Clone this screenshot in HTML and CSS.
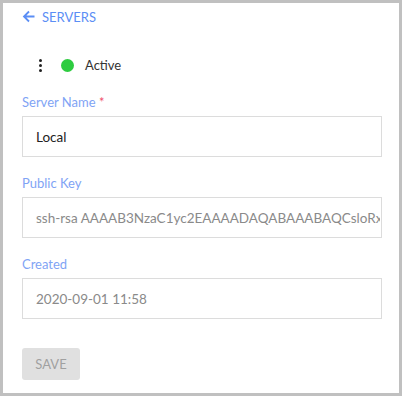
FILE: index.html
```html
<!DOCTYPE html>
<html>
<head>
	<title>Server</title>
	<link rel="stylesheet" href="styles.css">
</head>
<body>
	<div class="panel">
		<a class="back" href="#">
			<svg width="13" height="13" viewBox="0 0 13 13"><path d="M12.5 6.5H2M7 1.5L2 6.5L7 11.5" fill="none" stroke="#5b8ef5" stroke-width="1.8"/></svg>
			SERVERS
		</a>
		<div class="status">
			<span class="kebab"><i></i><i></i><i></i></span>
			<span class="dot"></span>
			<span class="state">Active</span>
		</div>
		<div class="field first">
			<label>Server Name <span class="req">*</span></label>
			<input type="text" class="dark" value="Local">
		</div>
		<div class="field">
			<label>Public Key</label>
			<input type="text" value="ssh-rsa AAAAB3NzaC1yc2EAAAADAQABAAABAQCsloRxHqT8" readonly>
		</div>
		<div class="field">
			<label>Created</label>
			<input type="text" value="2020-09-01 11:58" readonly>
		</div>
		<button class="save" disabled>SAVE</button>
	</div>
</body>
</html>
```
FILE: styles.css
```css
* {
	margin: 0;
	padding: 0;
	box-sizing: border-box;
}
body {
	font-family: "Lato", sans-serif;
	font-size: 13px;
}
.panel {
	width: 402px;
	height: 396px;
	border: 3px solid #c0c0c0;
	padding: 6px 17px 0 19px;
	background: #fff;
}
.back {
	display: flex;
	align-items: center;
	gap: 7px;
	height: 15px;
	color: #5b8ef5;
	text-decoration: none;
	font-size: 13px;
}
.status {
	display: flex;
	align-items: center;
	height: 18px;
	margin-top: 32px;
	padding-left: 17px;
}
.kebab {
	display: flex;
	flex-direction: column;
	gap: 2px;
	width: 3px;
}
.kebab i {
	width: 3px;
	height: 3px;
	background: #222;
	border-radius: 50%;
}
.dot {
	width: 13px;
	height: 13px;
	border-radius: 50%;
	background: #2ecc40;
	margin-left: 19px;
}
.state {
	margin-left: 11px;
	color: #333;
}
.field {
	margin-top: 18px;
}
.field.first {
	margin-top: 20px;
}
.field label {
	display: block;
	color: #7fa4f5;
	font-size: 13px;
	height: 17px;
	margin-bottom: 5px;
}
.req {
	color: #f0506e;
}
.field input {
	display: block;
	width: 360px;
	height: 41px;
	border: 1px solid #dcdcdc;
	padding: 0 1px 0 13px;
	font-family: inherit;
	font-size: 13.5px;
	color: #8a8a8a;
	outline: none;
}
.field input.dark {
	color: #222;
}
.save {
	margin-top: 29px;
	width: 58px;
	height: 32px;
	border: none;
	border-radius: 3px;
	background: #e0e0e0;
	color: #a0a0a0;
	font-family: inherit;
	font-size: 13px;
}
```
